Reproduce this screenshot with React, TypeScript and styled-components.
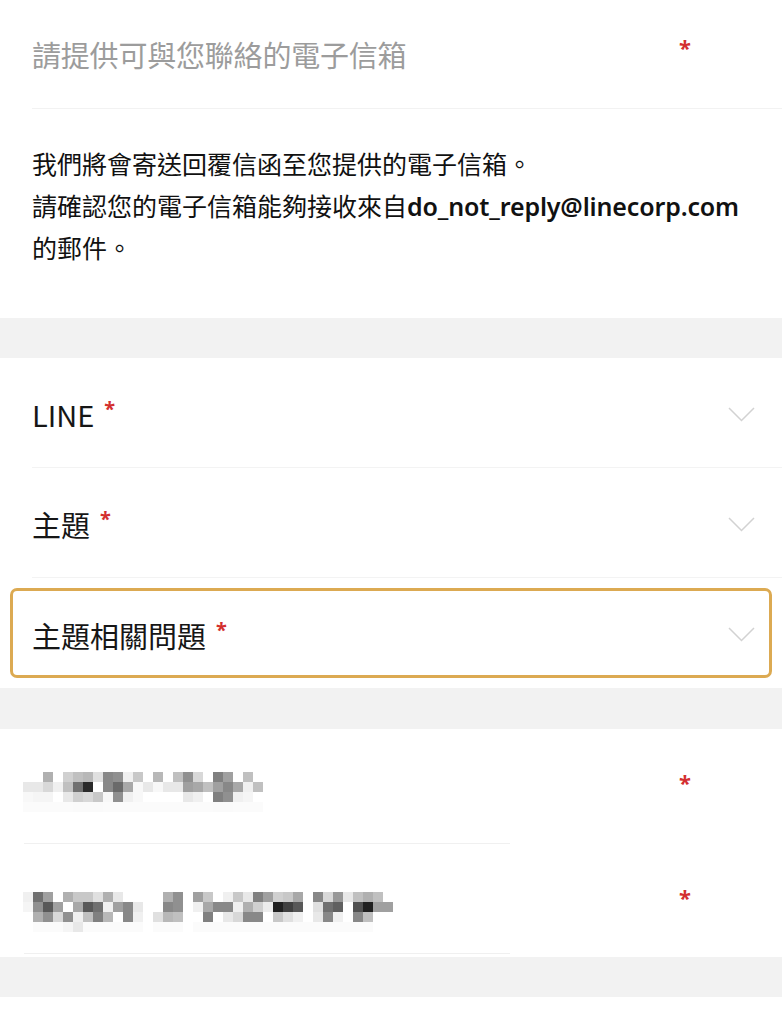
import React from "react";
import styled, { createGlobalStyle } from "styled-components";

const GlobalStyle = createGlobalStyle`
  html, body { margin: 0; padding: 0; background: #ffffff; }
  body {
    font-family: "Noto Sans CJK TC", "Noto Sans", sans-serif;
    color: #111111;
    -webkit-font-smoothing: antialiased;
  }
  * { box-sizing: border-box; }
`;

const Page = styled.div`
  width: 782px;
  min-height: 1035px;
  background: #ffffff;
  display: flex;
  flex-direction: column;
`;

const Section = styled.section<{ $padBottom?: number }>`
  background: #ffffff;
  display: flex;
  flex-direction: column;
  padding-bottom: ${(p) => p.$padBottom ?? 0}px;
`;

const Band = styled.div<{ $h: number }>`
  height: ${(p) => p.$h}px;
  background: #f2f2f2;
  flex-shrink: 0;
`;

const TextFieldRow = styled.div`
  height: 109px;
  margin-left: 32px;
  padding-right: 91px;
  border-bottom: 1px solid #f2f2f2;
  display: flex;
  align-items: center;
  justify-content: space-between;
`;

const Placeholder = styled.span`
  font-size: 29px;
  color: #9c9c9c;
  letter-spacing: -0.2px;
`;

const Required = styled.span<{ $size?: number }>`
  color: #d32f2f;
  font-weight: 700;
  font-family: "Noto Sans", sans-serif;
  font-size: ${(p) => p.$size ?? 22}px;
  line-height: 1;
`;

const FieldRequired = styled(Required)`
  align-self: flex-start;
  margin-top: 36px;
`;

const Notice = styled.p`
  margin: 0;
  padding: 33px 32px 50px;
  font-size: 25px;
  line-height: 42px;
  color: #111111;
`;

const Email = styled.span`
  font-family: "Noto Sans", sans-serif;
  font-weight: 600;
  letter-spacing: -0.15px;
  line-height: 1;
`;

const SelectRow = styled.div`
  height: 110px;
  margin-left: 32px;
  padding: 3px 27px 0 0;
  border-bottom: 1px solid #f3f3f3;
  display: flex;
  align-items: center;
  justify-content: space-between;
`;

const FocusRow = styled.div`
  height: 110px;
  padding: 10px;
`;

const FocusBox = styled.div`
  height: 90px;
  border: 3px solid #dcaa52;
  border-radius: 7px;
  padding: 3px 14px 0 19px;
  display: flex;
  align-items: center;
  justify-content: space-between;
`;

const Label = styled.span`
  font-size: 29px;
  color: #161616;
  display: inline-flex;
  align-items: flex-start;
`;

const LabelMark = styled(Required)`
  font-size: 20px;
  margin-left: 10px;
  margin-top: 6px;
`;

const RedactedRow = styled.div<{ $h: number; $top: number; $markTop: number }>`
  height: ${(p) => p.$h}px;
  padding: ${(p) => p.$top}px 91px 0 23px;
  display: flex;
  align-items: flex-start;
  justify-content: space-between;
  background: linear-gradient(#f0f0f0, #f0f0f0) 24px 100% / 486px 1px no-repeat;

  & > ${Required} {
    margin-top: ${(p) => p.$markTop}px;
  }
`;

const Chevron = () => (
  <svg width="27" height="15" viewBox="0 0 27 15" fill="none">
    <polyline points="1,1 13.5,13.5 26,1" stroke="#d2d2d2" strokeWidth="1.5" fill="none" />
  </svg>
);

const m1 = [
  "ff ff b0 ff d0 c0 b8 e0 88 90 f0 c8 ff b8 ff c0 90 d8 ff 80 a0 ff c0 ff",
  "e8 e8 d8 f0 c0 70 2a ff 88 6a a8 f8 e8 f8 e8 e8 a0 a8 c0 a0 88 a8 f0 c0",
  "f8 f5 f5 ff e8 d0 d8 c8 f8 90 f0 f8 ff ff ff ff e8 f0 ff 80 90 f0 f5 ff",
  "fb fb fb fb fb fa fa fa fb fb fb fb fb fb fb fb fb fb fb fa fa fb fb fb",
];

const m2 = [
  "f0 70 a0 ff b0 c8 c8 e0 b0 e8 ff ff ff ff b0 90 ff a0 c8 ff f0 c8 e8 80 a0 d0 c8 a8 ff 88 d8 98 e8 c0 b0 c0 ff",
  "f5 90 58 a0 ff a8 58 70 f0 a0 88 e8 ff ff 88 90 ff f0 a8 88 88 f0 b0 d0 ec 20 40 58 ff e0 70 60 ff 50 20 a0 a0",
  "ff b0 90 d8 90 f0 c0 80 b8 ff 88 f0 ff e0 b8 c0 ff ff 80 ff e8 d8 88 88 ff c8 e0 f0 ff e8 88 f0 ff 88 c0 ff ff",
  "ff fb fb fb f5 e8 fb fb fb fb fb fb ff fb fb fb ff fb fb fb fb fb fb fb fb fb fb fb fb fb fb fb fb fb fb ff ff",
];

const Mosaic = ({ rows }: { rows: string[] }) => {
  const grid = rows.map((r) => r.split(" "));
  const cols = grid[0].length;
  return (
    <svg width={cols * 10} height={grid.length * 10} viewBox={`0 0 ${cols * 10} ${grid.length * 10}`} aria-hidden="true">
      {grid.map((row, y) =>
        row.map((v, x) => (
          <rect key={`${x}-${y}`} x={x * 10} y={y * 10} width="10" height="10" fill={`#${v}${v}${v}`} />
        ))
      )}
    </svg>
  );
};

export default function App() {
  return (
    <>
      <GlobalStyle />
      <Page>
        <Section>
          <TextFieldRow>
            <Placeholder>請提供可與您聯絡的電子信箱</Placeholder>
            <FieldRequired>*</FieldRequired>
          </TextFieldRow>
          <Notice>
            我們將會寄送回覆信函至您提供的電子信箱。
            <br />
            請確認您的電子信箱能夠接收來自<Email>do_not_reply@linecorp.com</Email>
            <br />
            的郵件。
          </Notice>
        </Section>
        <Band $h={40} />
        <Section>
          <SelectRow>
            <Label>
              LINE<LabelMark>*</LabelMark>
            </Label>
            <Chevron />
          </SelectRow>
          <SelectRow>
            <Label>
              主題<LabelMark>*</LabelMark>
            </Label>
            <Chevron />
          </SelectRow>
          <FocusRow>
            <FocusBox>
              <Label>
                主題相關問題<LabelMark>*</LabelMark>
              </Label>
              <Chevron />
            </FocusBox>
          </FocusRow>
        </Section>
        <Band $h={41} />
        <Section $padBottom={3}>
          <RedactedRow $h={115} $top={43} $markTop={-1}>
            <Mosaic rows={m1} />
            <Required>*</Required>
          </RedactedRow>
          <RedactedRow $h={110} $top={48} $markTop={-6}>
            <Mosaic rows={m2} />
            <Required>*</Required>
          </RedactedRow>
        </Section>
        <Band $h={40} />
        <Section />
      </Page>
    </>
  );
}
